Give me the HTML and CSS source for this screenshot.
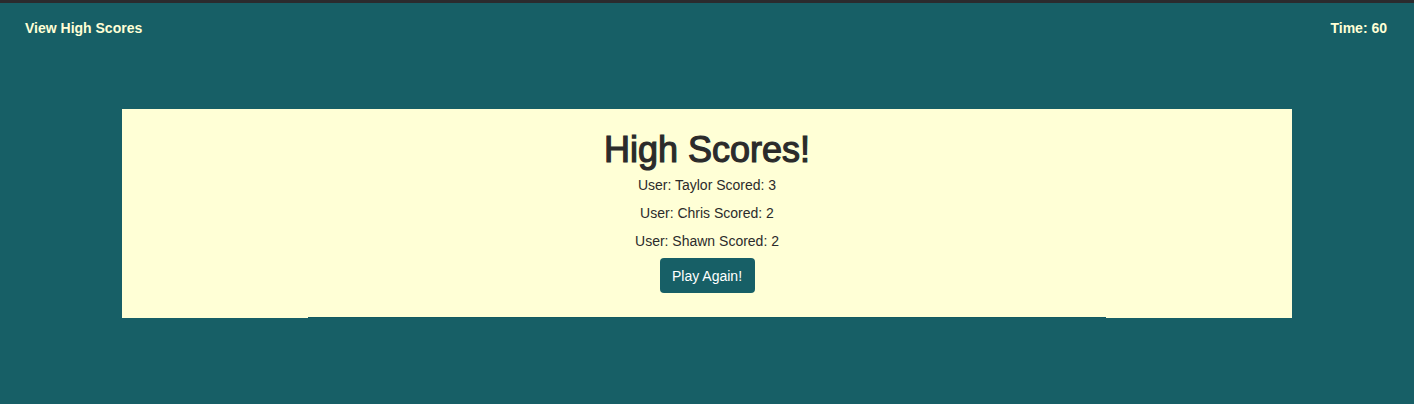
FILE: index.html
```html
<!DOCTYPE html>
<html>
<head>
<meta charset="utf-8">
<link rel="stylesheet" href="styles.css">
</head>
<body>
<div class="topstrip"></div>
<header class="header">
  <a class="view-link">View High Scores</a>
  <span class="timer">Time: 60</span>
</header>
<main class="card">
  <h1 class="title">High Scores!</h1>
  <p class="score">User: Taylor Scored: 3</p>
  <p class="score">User: Chris Scored: 2</p>
  <p class="score">User: Shawn Scored: 2</p>
  <button class="play">Play Again!</button>
  <div class="underline"></div>
</main>
</body>
</html>
```
FILE: styles.css
```css
html, body {
  margin: 0;
  padding: 0;
}
body {
  background: #175f66;
  font-family: "Liberation Sans", Arial, sans-serif;
  height: 404px;
  overflow: hidden;
}
.topstrip {
  height: 3px;
  background: #2b2b2e;
}
.header {
  display: flex;
  justify-content: space-between;
  align-items: center;
  padding: 0 27px 0 25px;
  height: 50px;
  color: #ffffd6;
  font-weight: bold;
  font-size: 14px;
}
.card {
  margin: 56px 122px 0 122px;
  height: 209px;
  background: #ffffd6;
  display: flex;
  flex-direction: column;
  align-items: center;
  color: #2b2b2b;
  box-sizing: border-box;
  padding-top: 20px;
}
.title {
  font-size: 36px;
  font-weight: normal;
  -webkit-text-stroke: 1.2px #2b2b2b;
  margin: 0 0 6px 0;
  line-height: 42px;
}
.score {
  font-size: 14px;
  line-height: 16px;
  margin: 0 0 12px 0;
}
.play {
  background: #175f66;
  color: #ffffff;
  border: none;
  border-radius: 4px;
  font-family: "Liberation Sans", Arial, sans-serif;
  font-size: 14px;
  width: 95px;
  height: 35px;
  margin-top: -3px;
}
.underline {
  margin-top: auto;
  width: 798px;
  height: 1px;
  background: #145a60;
}
```
